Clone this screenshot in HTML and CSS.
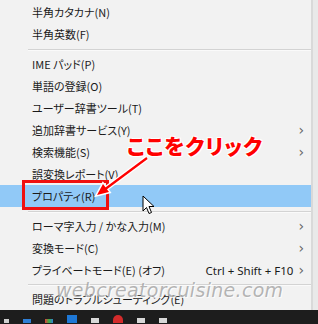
FILE: index.html
```html
<!DOCTYPE html>
<html lang="ja">
  <head>
    <meta charset="UTF-8" />
    <title>IME メニュー</title>
    <link rel="stylesheet" href="styles.css">
  </head>
  <body>
    <div class="screen">
      <div class="menu">
        <div class="item">半角カタカナ(N)</div>
        <div class="item">半角英数(F)</div>
        <div class="sep"></div>
        <div class="item">IME パッド(P)</div>
        <div class="item">単語の登録(O)</div>
        <div class="item">ユーザー辞書ツール(T)</div>
        <div class="item">追加辞書サービス(Y)<span class="arrow">&rsaquo;</span></div>
        <div class="item">検索機能(S)<span class="arrow">&rsaquo;</span></div>
        <div class="item">誤変換レポート(V)</div>
        <div class="item active">プロパティ(R)</div>
        <div class="sep"></div>
        <div class="item">ローマ字入力 / かな入力(M)<span class="arrow">&rsaquo;</span></div>
        <div class="item">変換モード(C)<span class="arrow">&rsaquo;</span></div>
        <div class="item">プライベートモード(E) (オフ)<span class="key">Ctrl + Shift + F10</span><span class="arrow">&rsaquo;</span></div>
        <div class="sep last"></div>
        <div class="item">問題のトラブルシューティング(E)</div>
      </div>
      <div class="taskbar">
        <span class="tb check"></span>
        <span class="tb blue"></span>
        <span class="tb multi"></span>
        <span class="tb square"></span>
        <span class="tb white"></span>
        <span class="tb red"></span>
        <span class="tb white"></span>
        <span class="tb white"></span>
      </div>

      <!-- annotation drawn over the screenshot -->
      <div class="redbox"></div>
      <div class="callout">ここをクリック</div>
      <svg class="pointer-line" width="318" height="324" viewBox="0 0 318 324">
        <line x1="147" y1="158" x2="104" y2="190" stroke="#fff" stroke-width="5" />
        <polygon points="97,195 103,184 109,192" fill="#fff" stroke="#fff" stroke-width="3" />
        <line x1="147" y1="158" x2="104" y2="190" stroke="#f00" stroke-width="2.2" />
        <polygon points="97,195 103,184 109,192" fill="#f00" />
      </svg>
      <svg class="cursor" width="14" height="21" viewBox="0 0 14 21">
        <path d="M1 1 L1 16 L4.5 12.5 L7 18.5 L9.5 17.5 L7 11.5 L12 11.5 Z" fill="#fff" stroke="#000" stroke-width="1" stroke-linejoin="round" />
      </svg>
      <div class="watermark">webcreatorcuisine.com</div>
    </div>
  </body>
</html>
```

FILE: styles.css
```css
body {
  margin: 0;
  background: #e6e6e6;
}
.screen {
  position: relative;
  width: 318px;
  height: 324px;
  overflow: hidden;
  background: #e9e9e9;
  font-family: "Noto Sans CJK JP", "Noto Sans", sans-serif;
  font-feature-settings: "palt";
}
.menu {
  width: 313px;
  height: 310px;
  padding-top: 1px;
  box-sizing: border-box;
  background: #f2f2f2;
  border-right: 2px solid #d9d9d9;
  display: flex;
  flex-direction: column;
}
.item {
  height: 22px;
  display: flex;
  align-items: center;
  padding-left: 32px;
  padding-right: 7px;
  font-size: 11px;
  color: #1a1a1a;
  white-space: nowrap;
}
.item.active {
  background: #91c9f7;
}
.arrow {
  margin-left: auto;
  color: #666;
  font-size: 14px;
  font-family: "DejaVu Sans", sans-serif;
}
.key {
  margin-left: auto;
  margin-right: 5px;
  font-family: "Noto Sans", sans-serif;
  font-size: 11.5px;
}
.key + .arrow {
  margin-left: 0;
}
.sep {
  height: 8px;
  margin-left: 28px;
  display: flex;
  align-items: center;
}
.sep::before {
  content: "";
  flex: 1;
  height: 1px;
  background: #d3d3d3;
  box-shadow: 0 1px 0 #fafafa;
}
.sep.last {
  height: 7px;
}
.taskbar {
  height: 14px;
  background: #1d1d1d;
  display: flex;
  align-items: flex-end;
  gap: 14px;
  padding-left: 4px;
}
.tb {
  width: 8px;
  height: 4px;
  margin-bottom: 1px;
}
.check { background: #cfcfcf; width: 5px; }
.blue { background: #2f7fd6; }
.multi { background: linear-gradient(90deg, #e23b3b, #3cb043, #2f7fd6); }
.square { background: #1e78d6; width: 10px; height: 8px; }
.white { background: #d8d8d8; height: 5px; }
.red { background: #d42b2b; width: 10px; height: 8px; border-radius: 5px 5px 0 0; }
.redbox {
  position: absolute;
  left: 22px;
  top: 180px;
  width: 81px;
  height: 24px;
  border: 3px solid #f01010;
}
.callout {
  position: absolute;
  left: 127px;
  top: 130px;
  color: #ff0000;
  font-size: 21px;
  font-weight: 900;
  letter-spacing: 1px;
  text-shadow: 1px 1px 0 #fff, -1px -1px 0 #fff, 1px -1px 0 #fff, -1px 1px 0 #fff;
}
.pointer-line {
  position: absolute;
  left: 0;
  top: 0;
}
.cursor {
  position: absolute;
  left: 142px;
  top: 195px;
}
.watermark {
  position: absolute;
  left: 56px;
  top: 279px;
  font-family: "DejaVu Sans", sans-serif;
  font-style: italic;
  font-size: 19px;
  letter-spacing: 0.3px;
  color: rgba(150, 150, 150, 0.7);
  text-shadow: 1px 1px 0 rgba(255, 255, 255, 0.8);
}
```
